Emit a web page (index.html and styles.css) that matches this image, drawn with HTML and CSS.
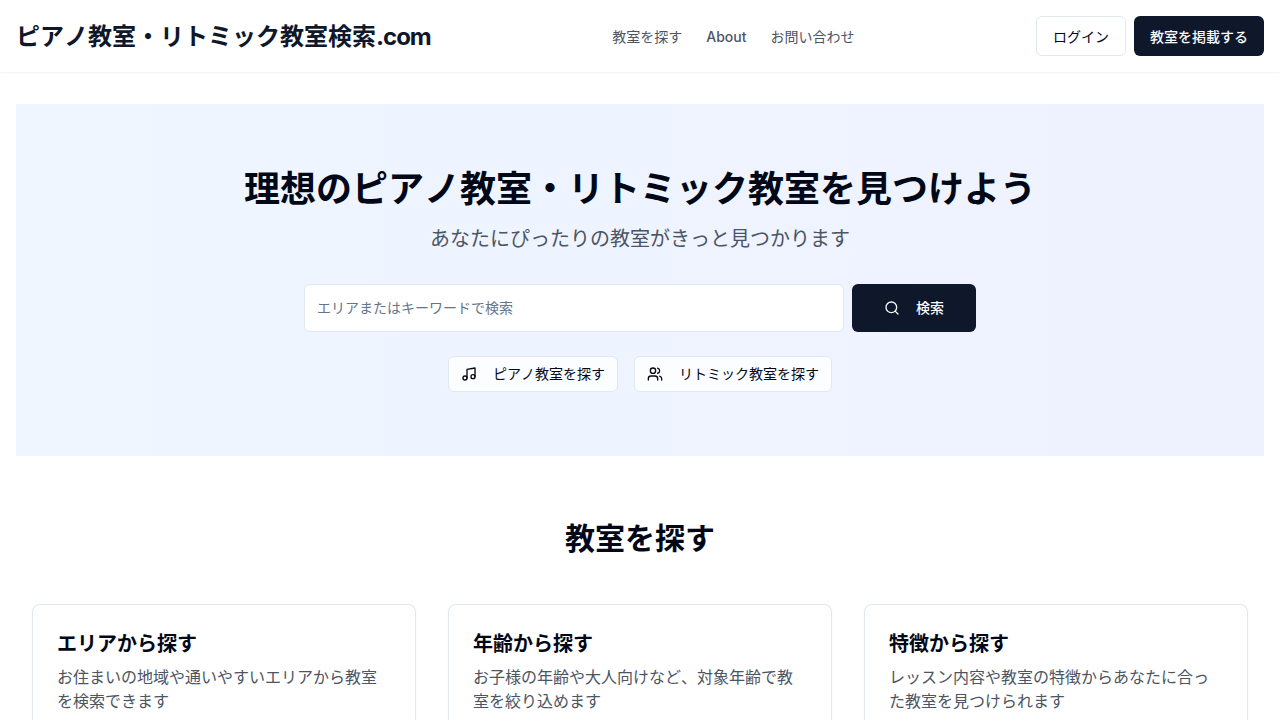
FILE: index.html
```html
<!DOCTYPE html>
<html lang="ja">
<head>
<meta charset="utf-8">
<title>ピアノ教室・リトミック教室検索.com</title>
<link rel="stylesheet" href="styles.css">
</head>
<body>
<header class="header">
  <a class="brand">ピアノ教室・リトミック教室検索<span class="brand-tld">.com</span></a>
  <nav class="nav"><a>教室を探す</a><a class="nav-latin">About</a><a>お問い合わせ</a></nav>
  <div class="actions"><button class="btn btn-outline">ログイン</button><button class="btn btn-dark">教室を掲載する</button></div>
</header>
<main class="main">
  <section class="hero">
    <h1 class="hero-title">理想のピアノ教室・リトミック教室を見つけよう</h1>
    <p class="hero-sub">あなたにぴったりの教室がきっと見つかります</p>
    <form class="search">
      <input class="search-input" type="text" placeholder="エリアまたはキーワードで検索">
      <button class="btn btn-dark btn-search" type="button"><svg class="icon" viewBox="0 0 24 24"><circle cx="11" cy="11" r="8"/><path d="m21 21-4.3-4.3"/></svg>検索</button>
    </form>
    <div class="quick">
      <button class="btn btn-quick"><svg class="icon" viewBox="0 0 24 24"><path d="M9 18V5l12-2v13"/><circle cx="6" cy="18" r="3"/><circle cx="18" cy="16" r="3"/></svg>ピアノ教室を探す</button>
      <button class="btn btn-quick"><svg class="icon" viewBox="0 0 24 24"><path d="M16 21v-2a4 4 0 0 0-4-4H6a4 4 0 0 0-4 4v2"/><circle cx="9" cy="7" r="4"/><path d="M22 21v-2a4 4 0 0 0-3-3.87"/><path d="M16 3.13a4 4 0 0 1 0 7.75"/></svg>リトミック教室を探す</button>
    </div>
  </section>
  <section class="find">
    <h2 class="find-title">教室を探す</h2>
    <div class="cards">
      <article class="card"><h3 class="card-title">エリアから探す</h3><p class="card-text">お住まいの地域や通いやすいエリアから教室を検索できます</p></article>
      <article class="card"><h3 class="card-title">年齢から探す</h3><p class="card-text">お子様の年齢や大人向けなど、対象年齢で教室を絞り込めます</p></article>
      <article class="card"><h3 class="card-title">特徴から探す</h3><p class="card-text">レッスン内容や教室の特徴からあなたに合った教室を見つけられます</p></article>
    </div>
  </section>
</main>
</body>
</html>
```
FILE: styles.css
```css
* { box-sizing: border-box; margin: 0; padding: 0; }
body { height: 720px; overflow: hidden; background: #fff; color: #020817; font: 16px/24px Inter, "Noto Sans CJK JP", sans-serif; font-kerning: none; }
.header { height: 72px; padding: 0 16px; display: flex; align-items: center; justify-content: space-between; background: #fff; box-shadow: 0 1px 2px rgba(0,0,0,.05); }
.brand { font-family: "Noto Sans CJK JP", sans-serif; font-size: 24px; line-height: 32px; font-weight: 700; color: #0f172a; white-space: nowrap; }
.brand-tld { font-family: Inter, sans-serif; letter-spacing: -1px; }
.nav { display: flex; gap: 24px; padding-top: 1px; font-size: 14px; line-height: 20px; font-weight: 400; color: #4b5563; }
.nav-latin { font-weight: 500; }
.actions { display: flex; gap: 8px; }
.btn { display: inline-flex; align-items: center; justify-content: center; height: 40px; padding: 0 16px; border: 1px solid #e2e8f0; border-radius: 6px; background: #fff; color: #020817; font: 400 14px/20px Inter, "Noto Sans CJK JP", sans-serif; font-kerning: none; white-space: nowrap; }
.btn-outline { padding-top: 1px; }
.btn-dark { background: #0f172a; border: 0; padding-top: 1px; color: #f8fafc; font-weight: 500; }
.icon { width: 16px; height: 16px; margin-right: 16px; fill: none; stroke: currentColor; stroke-width: 2; stroke-linecap: round; stroke-linejoin: round; }
.main { padding: 32px 16px 0; }
.hero { height: 352px; padding-top: 62px; display: flex; flex-direction: column; align-items: center; background: linear-gradient(to right, #eff6ff, #eef2ff); }
.hero-title { font-family: "Noto Sans CJK JP", sans-serif; font-size: 36px; line-height: 40px; font-weight: 700; margin-bottom: 19px; }
.hero-sub { font-size: 20px; line-height: 28px; color: #4b5563; margin-bottom: 31px; }
.search { display: flex; gap: 8px; width: 672px; }
.search-input { flex: 1; height: 48px; padding: 0 12px 1px; border: 1px solid #e2e8f0; border-radius: 6px; background: #fff; font: 14px/20px Inter, "Noto Sans CJK JP", sans-serif; font-kerning: none; }
.search-input::placeholder { color: #64748b; }
.btn-search { width: 124px; height: 48px; padding-top: 0; }
.quick { display: flex; gap: 16px; margin-top: 24px; }
.btn-quick { height: 36px; padding: 0 12px; background: rgba(255,255,255,.8); }
.find { padding: 64px 16px 0; }
.find-title { font-size: 30px; line-height: 36px; font-weight: 700; text-align: center; margin-bottom: 48px; }
.cards { display: grid; grid-template-columns: repeat(3, 1fr); gap: 32px; }
.card { height: 116px; padding: 25px 24px 0; border: 1px solid #e2e8f0; border-bottom: 0; border-radius: 8px 8px 0 0; background: #fff; box-shadow: 0 1px 2px rgba(0,0,0,.05); }
.card-title { font-size: 20px; line-height: 28px; font-weight: 700; margin-bottom: 7px; }
.card-text { color: #4b5563; }
```
